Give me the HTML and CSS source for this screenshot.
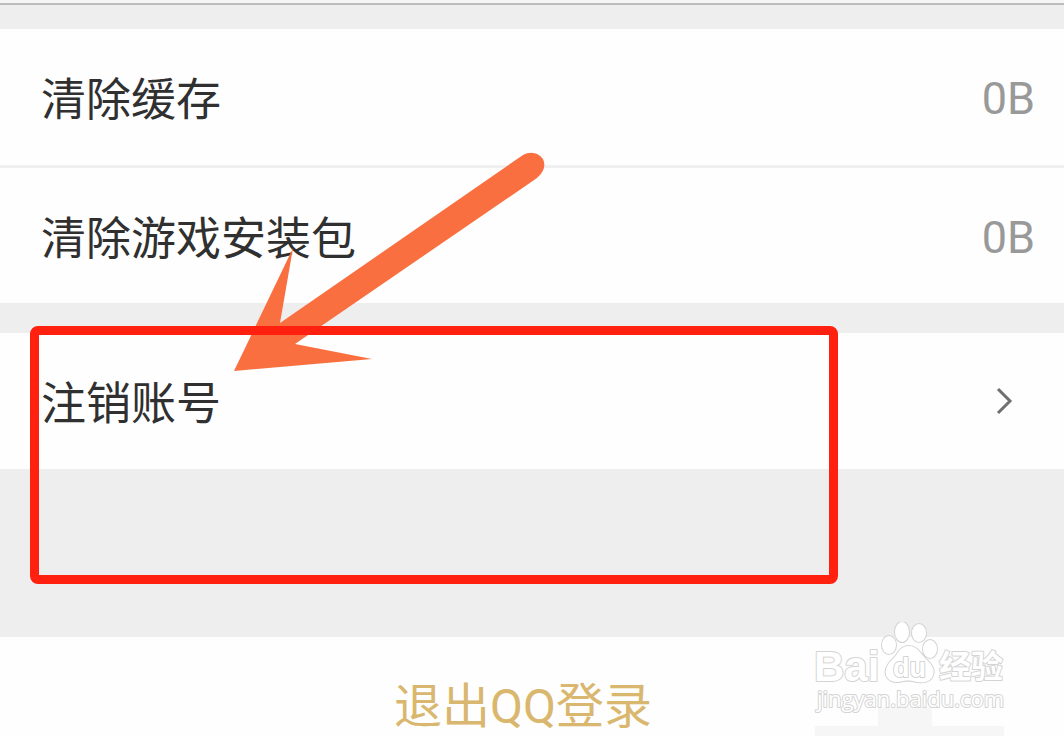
FILE: index.html
```html
<!DOCTYPE html>
<html lang="zh-CN">
<head>
<meta charset="utf-8">
<meta name="viewport" content="width=device-width, initial-scale=1">
<title>设置</title>
<link rel="stylesheet" href="styles.css">
</head>
<body>
<main class="settings">
  <header class="topbar"></header>
  <section class="group">
    <button class="row" type="button"><span class="label">清除缓存</span><span class="value">0B</span></button>
    <button class="row" type="button"><span class="label">清除游戏安装包</span><span class="value">0B</span></button>
  </section>
  <section class="group">
    <button class="row" type="button"><span class="label">注销账号</span>
      <svg class="chevron" viewBox="0 0 20 32" aria-hidden="true"><path d="M3 4 15 16 3 28"/></svg>
    </button>
  </section>
  <footer class="footer">
    <button class="logout" type="button">退出QQ登录</button>
  </footer>
  <svg class="arrow" viewBox="0 0 320 224" aria-hidden="true">
    <path d="M4 221 63 98 50 173 293 5C300 1 308 2 313 9C316 16 314 22 307 28L65 194 142 209Z"/>
  </svg>
  <div class="frame"></div>
  <svg class="watermark" viewBox="0 0 200 114" aria-label="Baidu 经验">
    <g class="mosaic">
      <path d="M67 85H121V108H67Z"/>
      <path d="M4 104H193V114H4Z"/>
    </g>
    <g class="mark">
      <ellipse cx="78" cy="23" rx="7" ry="9"/>
      <ellipse cx="91" cy="10" rx="7" ry="10"/>
      <ellipse cx="108" cy="11" rx="7" ry="9"/>
      <ellipse cx="119" cy="27" rx="7" ry="9"/>
      <path d="M98 24C106 24 109 31 114 36C121 43 124 47 122 53C120 60 113 61 106 60C99 58 95 58 88 60C79 61 73 55 75 47C77 40 83 37 86 32C89 27 92 24 98 24Z"/>
      <text class="brand" x="3" y="59">Bai</text>
      <text class="du" x="82" y="55">du</text>
      <text class="cjk" x="128" y="56">经验</text>
      <text class="site" x="6" y="85">jingyan.baidu.com</text>
    </g>
  </svg>
</main>
</body>
</html>
```
FILE: styles.css
```css
* {
  box-sizing: border-box;
}

body {
  margin: 0;
  background: #eeeeee;
  color: #303030;
  font-family: Roboto, "Noto Sans CJK SC", sans-serif;
}

button {
  border: 0;
  background: none;
  font: inherit;
  color: inherit;
}

.settings {
  position: relative;
  display: flex;
  flex-direction: column;
  height: 100vh;
  overflow: hidden;
}

.topbar {
  flex: none;
  height: 5px;
  margin-bottom: 24px;
  background: #f5f5f5;
  border-bottom: 2px solid #bcbcbc;
}

.group {
  flex: none;
  margin-bottom: 30px;
  background: #fefefe;
}

.row {
  display: flex;
  align-items: center;
  justify-content: space-between;
  width: 100%;
  height: 136px;
  padding: 4px 29px 0 41px;
  font-size: 45px;
  line-height: 60px;
  text-align: left;
}

.row + .row {
  height: 138px;
  border-top: 3px solid #f0f0f0;
}

.label {
  padding-top: 4px;
}

.value {
  color: #999999;
}

.chevron {
  width: 20px;
  height: 32px;
  margin: 0 20px 4px 0;
  fill: none;
  stroke: #707070;
  stroke-width: 3;
}

.footer {
  flex: 1;
  margin-top: 138px;
  padding-top: 38px;
  background: #fefefe;
  text-align: center;
}

.logout {
  padding: 0;
  margin-right: 18px;
  font-size: 48px;
  line-height: 64px;
  color: #d9b76e;
}

/* Annotations lie over the page content */
.arrow {
  position: absolute;
  left: 230px;
  top: 150px;
  width: 320px;
  fill: #fa6f40;
}

.frame {
  position: absolute;
  left: 30px;
  top: 326px;
  width: 808px;
  height: 258px;
  border: 9px solid #ff2010;
  border-radius: 8px;
}

.watermark {
  position: absolute;
  right: 53px;
  bottom: 0;
  width: 200px;
}

.mosaic {
  fill: #f6f6f6;
}

.mark {
  fill: #ffffff;
  stroke: #d4d4d4;
  stroke-width: 2;
  paint-order: stroke;
  stroke-linejoin: round;
}

.brand,
.du {
  font: bold 42px "Liberation Sans", sans-serif;
}

.du {
  font-size: 27px;
}

.cjk {
  font: bold 32px "Noto Sans CJK SC", sans-serif;
}

.site {
  font: 22px "Open Sans", sans-serif;
}
```
